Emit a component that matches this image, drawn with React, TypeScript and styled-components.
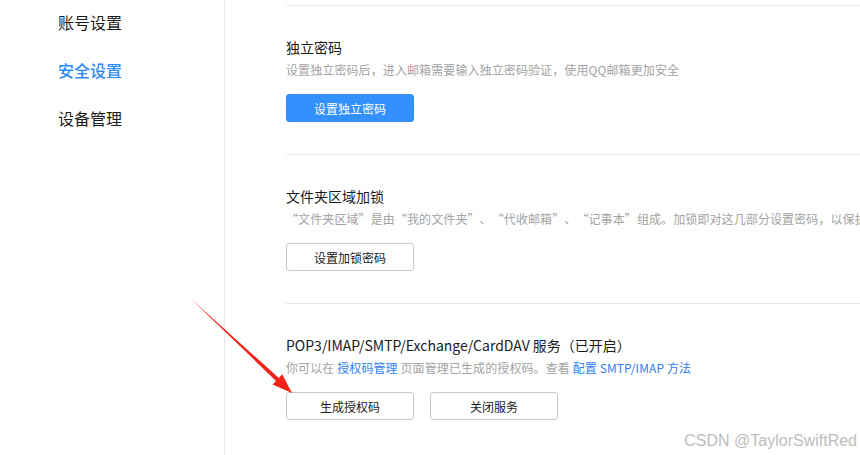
import React from "react";
import styled, { createGlobalStyle } from "styled-components";

const GlobalStyle = createGlobalStyle`
  html, body {
    margin: 0;
    padding: 0;
    background: #fff;
  }
  body {
    font-family: "Noto Sans CJK SC", "Noto Sans", sans-serif;
    color: #333;
    text-spacing-trim: space-all;
  }
`;

const Page = styled.div`
  position: relative;
  display: flex;
  width: 860px;
  height: 455px;
  overflow: hidden;
`;

const Sidebar = styled.nav`
  width: 225px;
  flex-shrink: 0;
  border-right: 1px solid #e6e6e6;
  padding: 10px 0 0 58px;
  box-sizing: border-box;
  display: flex;
  flex-direction: column;
  gap: 24px;
`;

const NavItem = styled.div<{ $active?: boolean }>`
  font-size: 16px;
  line-height: 24px;
  color: ${(p) => (p.$active ? "#2b8af7" : "#1a1a1a")};
  font-weight: ${(p) => (p.$active ? 500 : 400)};
`;

const Main = styled.main`
  flex: 1;
  padding: 5px 0 0 61px;
  white-space: nowrap;
  overflow: hidden;
`;

const Section = styled.section`
  border-top: 1px solid #e8e8e8;
  padding: 31px 0 32px;
`;

const Title = styled.div`
  font-size: 14px;
  line-height: 20px;
  color: #1a1a1a;
`;

const Wide = styled.span`
  font-feature-settings: "fwid";
`;

const Desc = styled.div<{ $wide?: boolean }>`
  margin-top: 4px;
  font-size: 12px;
  line-height: 18px;
  color: #a3a3a3;
  letter-spacing: 0.1px;
  font-feature-settings: ${(p) => (p.$wide ? '"fwid"' : "normal")};
`;

const Link = styled.span`
  color: #2f80f0;
`;

const Actions = styled.div`
  margin-top: 15px;
  display: flex;
  gap: 16px;
`;

const Button = styled.button<{ $primary?: boolean }>`
  width: 128px;
  height: 28px;
  box-sizing: border-box;
  border-radius: 3px;
  font-family: inherit;
  font-size: 12px;
  cursor: pointer;
  padding: 0;
  background: ${(p) => (p.$primary ? "#3390ff" : "#fff")};
  color: ${(p) => (p.$primary ? "#fff" : "#1a1a1a")};
  border: 1px solid ${(p) => (p.$primary ? "#3390ff" : "#c9c9c9")};
`;

const Arrow = styled.svg`
  position: absolute;
  left: 180px;
  top: 290px;
  width: 120px;
  height: 110px;
  pointer-events: none;
`;

const Watermark = styled.div`
  position: absolute;
  right: 3px;
  bottom: 5px;
  font-family: "Liberation Sans", Arial, sans-serif;
  font-size: 16px;
  color: #bdbdbd;
`;

export default function App() {
  return (
    <Page>
      <GlobalStyle />
      <Sidebar>
        <NavItem>账号设置</NavItem>
        <NavItem $active>安全设置</NavItem>
        <NavItem>设备管理</NavItem>
      </Sidebar>
      <Main>
        <Section>
          <Title>独立密码</Title>
          <Desc>设置独立密码后，进入邮箱需要输入独立密码验证，使用QQ邮箱更加安全</Desc>
          <Actions>
            <Button $primary>设置独立密码</Button>
          </Actions>
        </Section>
        <Section>
          <Title>文件夹区域加锁</Title>
          <Desc $wide>
            “文件夹区域”是由“我的文件夹”、“代收邮箱”、“记事本”组成。加锁即对这几部分设置密码，以保护其中的内容
          </Desc>
          <Actions>
            <Button>设置加锁密码</Button>
          </Actions>
        </Section>
        <Section>
          <Title>
            POP3/IMAP/SMTP/Exchange/CardDAV 服务<Wide>（已开启）</Wide>
          </Title>
          <Desc>
            你可以在 <Link>授权码管理</Link> 页面管理已生成的授权码<Wide>。</Wide>查看{" "}
            <Link>配置 SMTP/IMAP 方法</Link>
          </Desc>
          <Actions>
            <Button>生成授权码</Button>
            <Button>关闭服务</Button>
          </Actions>
        </Section>
      </Main>
      <Arrow viewBox="0 0 120 110">
        <polygon
          points="10,8 98.8,87.9 102.2,84.3 112,103 92.6,94.5 96,90.9"
          fill="#f0221a"
        />
      </Arrow>
      <Watermark>CSDN @TaylorSwiftRed</Watermark>
    </Page>
  );
}
